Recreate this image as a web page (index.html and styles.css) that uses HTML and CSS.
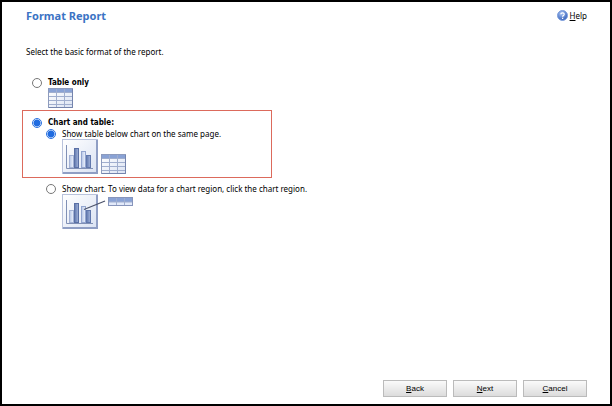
FILE: index.html
```html
<!DOCTYPE html>
<html lang="en">
<head>
    <meta charset="UTF-8">
    <meta name="viewport" content="width=device-width, initial-scale=1.0">
    <title>Format Report</title>
    <link rel="stylesheet" href="styles.css">
</head>
<body>
    <!-- Shared icon shapes -->
    <svg class="icon-defs" aria-hidden="true">
        <defs>
            <linearGradient id="barDark" x1="0" y1="0" x2="1" y2="0">
                <stop offset="0" stop-color="#6078ae"/>
                <stop offset="1" stop-color="#a2b3da"/>
            </linearGradient>
            <linearGradient id="barLight" x1="0" y1="0" x2="1" y2="0">
                <stop offset="0" stop-color="#b5c5e6"/>
                <stop offset="1" stop-color="#eef3fd"/>
            </linearGradient>
            <linearGradient id="paper" x1="0" y1="0" x2="1" y2="1">
                <stop offset="0" stop-color="#ffffff"/>
                <stop offset="1" stop-color="#dbe3f3"/>
            </linearGradient>
            <radialGradient id="ball" cx="0.4" cy="0.3" r="0.7">
                <stop offset="0" stop-color="#a9c5f5"/>
                <stop offset="1" stop-color="#3460b8"/>
            </radialGradient>
            <symbol id="table" viewBox="0 0 25 20">
                <rect x="0.5" y="0.5" width="24" height="19" fill="url(#paper)" stroke="#8d9bbd"/>
                <rect x="1" y="1" width="23" height="3" fill="#89a2d5"/>
                <path d="M1 4.5H24M1 8.5H24M1 12.5H24M1 16.5H24M8.5 1V19M16.5 1V19" fill="none" stroke="#a0aece"/>
                <path d="M24.5 1V19.5H1" fill="none" stroke="#7484ad"/>
            </symbol>
            <symbol id="chart" viewBox="0 0 36 35">
                <rect x="0.5" y="0.5" width="35" height="34" fill="#c9d2e8" stroke="#b9c3dc"/>
                <rect x="1" y="1" width="33" height="32" fill="url(#paper)"/>
                <path d="M35 1V34H1" fill="none" stroke="#8f9ec4" stroke-width="2"/>
                <rect x="7.5" y="16.5" width="4" height="12" fill="url(#barLight)" stroke="#a3b2d5"/>
                <rect x="12.5" y="9.5" width="4" height="19" fill="url(#barDark)" stroke="#5a70a5"/>
                <rect x="19.5" y="12.5" width="4" height="16" fill="url(#barLight)" stroke="#93a5cf"/>
                <rect x="24.5" y="16.5" width="4" height="12" fill="url(#barDark)" stroke="#6077ac"/>
                <path d="M4.5 6V29.5H31" fill="none" stroke="#8090b5"/>
            </symbol>
        </defs>
    </svg>

    <form class="wizard">
        <header class="header">
            <h1>Format Report</h1>
            <a class="help" href="#help">
                <svg width="11" height="11" viewBox="0 0 11 11" aria-hidden="true">
                    <circle cx="5.5" cy="5.5" r="5" fill="url(#ball)" stroke="#7e9fdc"/>
                    <path d="M3.8 4.3C3.9 2.4 7.3 2.4 7.2 4.4C7.1 5.5 5.6 5.5 5.6 6.8M5.6 7.8V9" fill="none" stroke="#fff" stroke-width="1.2"/>
                </svg>
                <span><u>H</u>elp</span>
            </a>
        </header>

        <main class="content">
            <p class="intro">Select the basic format of the report.</p>

            <div class="option">
                <input type="radio" id="tableOnly" name="format">
                <label class="option-title" for="tableOnly">Table only</label>
                <svg class="preview" width="25" height="20" aria-hidden="true"><use href="#table"/></svg>
            </div>

            <div class="highlight">
                <div class="option">
                    <input type="radio" id="chartTable" name="format" checked>
                    <label class="option-title" for="chartTable">Chart and table:</label>
                </div>
                <div class="option sub-option">
                    <input type="radio" id="samePage" name="layout" checked>
                    <label for="samePage">Show table below chart on the same page.</label>
                    <div class="preview">
                        <svg width="36" height="35" aria-hidden="true"><use href="#chart"/></svg>
                        <svg width="25" height="20" aria-hidden="true"><use href="#table"/></svg>
                    </div>
                </div>
            </div>

            <div class="option sub-option">
                <input type="radio" id="clickRegion" name="layout">
                <label for="clickRegion">Show chart. To view data for a chart region, click the chart region.</label>
                <svg class="preview" width="71" height="35" viewBox="0 0 71 35" aria-hidden="true">
                    <use href="#chart" width="36" height="35"/>
                    <path d="M22 15.5L43 7" stroke="#4c536b" stroke-width="1.3"/>
                    <rect x="46.5" y="3.5" width="24" height="8" fill="#e3eafa" stroke="#8795bb"/>
                    <rect x="47" y="4" width="23" height="4" fill="#89a2d5"/>
                    <path d="M47 8H70M54.5 4V11M62.5 4V11" fill="none" stroke="#a0aece"/>
                </svg>
            </div>
        </main>

        <footer class="buttons">
            <button type="button"><u>B</u>ack</button>
            <button type="button"><u>N</u>ext</button>
            <button type="button"><u>C</u>ancel</button>
        </footer>
    </form>
</body>
</html>
```
FILE: styles.css
```css
* {
    box-sizing: border-box;
}
body {
    margin: 0;
    background-color: #fff;
    color: #000;
    font-family: Tahoma, "Noto Sans", sans-serif;
    font-size: 8px;
    line-height: 11px;
}
.icon-defs {
    position: absolute;
    width: 0;
    height: 0;
}
/* Page frame */
.wizard {
    display: flex;
    flex-direction: column;
    min-height: 100vh;
    padding: 8px 23px 7px 20px;
    border: 2px solid #000;
}
.header {
    display: flex;
    justify-content: space-between;
    align-items: flex-start;
    padding-left: 4px;
}
h1 {
    margin: 0;
    color: #3b73c4;
    font-size: 11px;
    line-height: 12px;
}
.help {
    display: flex;
    align-items: center;
    gap: 2px;
    color: #000;
    text-decoration: none;
}
/* Options */
.content {
    flex: 1;
}
.intro {
    margin: 24px 0 20px 4px;
}
.option {
    display: grid;
    grid-template-columns: 10px 1fr;
    column-gap: 6px;
    align-items: center;
    padding-left: 10px;
}
.option-title {
    font-family: Tahoma, "DejaVu Sans Condensed", sans-serif;
    font-weight: bold;
}
.sub-option {
    padding-left: 24px;
}
.preview {
    grid-column: 2;
    display: flex;
    align-items: flex-end;
    gap: 3px;
}
.highlight {
    max-width: 250px;
    margin: 2px 0 5px;
    padding: 6px 0 3px;
    border: 1px solid #dc6a5c;
}
.highlight .option {
    margin-left: -1px;
}
input[type="radio"] {
    appearance: none;
    width: 10px;
    height: 10px;
    margin: 0;
    border: 1px solid #777;
    border-radius: 50%;
    background-color: #fff;
}
input[type="radio"]:checked {
    border-color: #2b72e0;
    background-image: radial-gradient(circle, #1f6be0 3px, #fff 4px);
}
/* Bottom buttons */
.buttons {
    display: flex;
    justify-content: flex-end;
    gap: 6px;
}
button {
    width: 64px;
    height: 17px;
    padding: 0;
    border: 1px solid #bbb;
    background: linear-gradient(#fafafa, #dcdcdc);
    color: #000;
    font-family: Arial, "Liberation Sans", sans-serif;
    font-size: 8px;
    line-height: 12px;
}
```
